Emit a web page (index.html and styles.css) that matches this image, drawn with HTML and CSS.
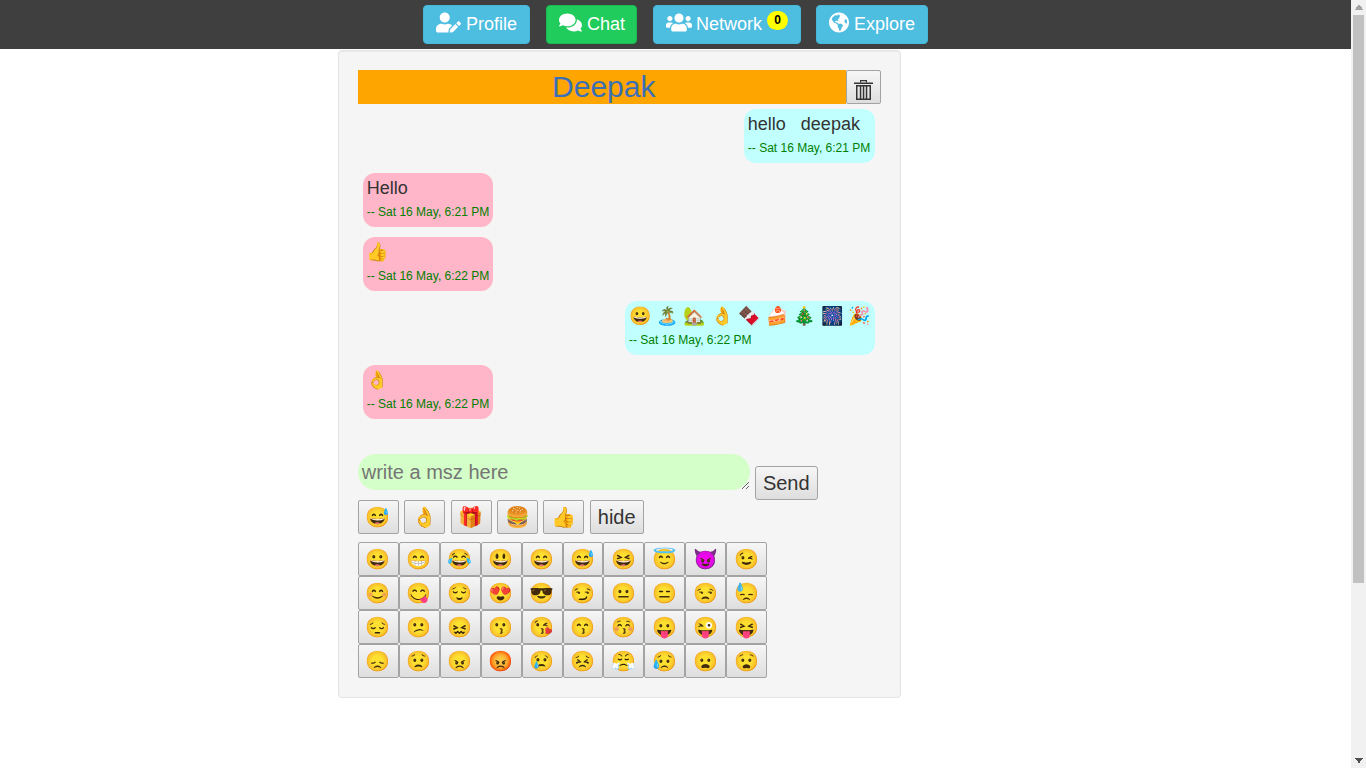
FILE: index.html
```html
<!DOCTYPE html>
<html>
<head>
<meta charset="utf-8">
<title>Chat</title>
<link rel="stylesheet" href="styles.css">
</head>
<body>
<nav class="topbar">
  <a class="nav-btn"><svg class="ic ic-user" viewBox="0 0 640 512"><path d="M224 256c70.700 0 128-57.300 128-128S294.700 0 224 0 96 57.300 96 128s57.300 128 128 128zm89.600 32h-16.700c-22.200 10.200-46.900 16-72.900 16s-50.600-5.800-72.900-16h-16.700C60.200 288 0 348.200 0 422.400V464c0 26.500 21.500 48 48 48h274.900c-2.400-6.800-3.400-14-2.600-21.300l6.800-60.900 1.200-11.100 7.900-7.900 77.300-77.300c-24.500-27.700-60-45.500-99.900-45.500zm45.300 145.300l-6.800 61c-1.100 10.200 7.500 18.800 17.600 17.600l60.900-6.800 137.900-137.900-71.700-71.700-137.900 137.800zM633 268.900L595.100 231c-9.300-9.300-24.500-9.300-33.800 0l-37.800 37.800-4.100 4.100 71.800 71.700 41.800-41.800c9.300-9.400 9.300-24.500 0-33.900z"/></svg> Profile</a>
  <a class="nav-btn nav-green"><svg class="ic ic-comments" viewBox="0 0 576 512"><path d="M416 192c0-88.400-93.100-160-208-160S0 103.600 0 192c0 34.300 14.100 65.900 38 92-13.400 30.200-35.500 54.200-35.800 54.500-2.200 2.300-2.800 5.700-1.500 8.700S4.800 352 8 352c36.600 0 66.900-12.300 88.700-25 32.200 15.700 70.300 25 111.300 25 114.900 0 208-71.600 208-160zm122 220c23.900-26 38-57.700 38-92 0-66.900-53.500-124.200-129.300-148.100.9 6.600 1.300 13.300 1.300 20.100 0 105.900-107.700 192-240 192-10.800 0-21.300-.8-31.700-1.900C207.800 439.600 281.800 480 368 480c41 0 79.100-9.200 111.300-25 21.800 12.700 52.100 25 88.700 25 3.200 0 6.100-1.900 7.300-4.800 1.300-2.900.7-6.300-1.500-8.700-.3-.3-22.400-24.200-35.800-54.500z"/></svg> Chat</a>
  <a class="nav-btn nav-network"><svg class="ic ic-users" viewBox="0 0 640 512"><path d="M96 224c35.300 0 64-28.700 64-64s-28.700-64-64-64-64 28.700-64 64 28.700 64 64 64zm448 0c35.300 0 64-28.700 64-64s-28.700-64-64-64-64 28.700-64 64 28.700 64 64 64zm32 32h-64c-17.600 0-33.500 7.100-45.100 18.600 40.300 22.100 68.900 62 75.100 109.400h66c17.700 0 32-14.300 32-32v-32c0-35.300-28.700-64-64-64zm-256 0c61.900 0 112-50.100 112-112S381.900 32 320 32 208 82.100 208 144s50.100 112 112 112zm76.800 32h-8.300c-20.800 10-43.900 16-68.500 16s-47.600-6-68.500-16h-8.300C179.600 288 128 339.600 128 403.200V432c0 26.500 21.500 48 48 48h288c26.500 0 48-21.500 48-48v-28.800c0-63.600-51.600-115.200-115.200-115.200zm-223.700-13.400C161.500 263.100 145.600 256 128 256H64c-35.300 0-64 28.700-64 64v32c0 17.700 14.300 32 32 32h65.900c6.300-47.400 34.900-87.300 75.200-109.400z"/></svg> Network<span class="badge">0</span></a>
  <a class="nav-btn nav-explore"><svg class="ic ic-globe" viewBox="0 0 496 512"><path d="M248 8C111.030 8 0 119.030 0 256s111.030 248 248 248 248-111.030 248-248S384.970 8 248 8zm82.290 357.600c-3.900 3.880-7.990 7.950-11.310 11.280-2.990 3-5.100 6.700-6.170 10.710-1.510 5.660-2.730 11.380-4.770 16.870l-17.390 46.850c-13.760 3-28 4.690-42.650 4.690v-27.380c1.690-12.620-7.640-36.260-22.630-51.250-6-6-9.370-14.140-9.370-22.630v-32.010c0-11.640-6.270-22.340-16.460-27.970-14.370-7.950-34.810-19.060-48.810-26.110-11.480-5.780-22.100-13.140-31.650-21.750l-.8-.72a114.792 114.792 0 0 1-18.060-20.740c-9.380-13.770-24.660-36.420-34.590-51.140 20.470-45.500 57.360-82.040 103.200-101.890l24.010 12.010C203.480 89.740 216 82.010 216 70.110v-11.300c7.990-1.290 16.120-2.110 24.430-2.410l28.300 28.300c6.250 6.250 6.250 16.380 0 22.630L264 112l-10.340 10.340c-3.120 3.120-3.120 8.190 0 11.310l4.690 4.690c3.120 3.120 3.120 8.190 0 11.310l-8 8a8.008 8.008 0 0 1-5.660 2.340h-8.990c-2.080 0-4.080.81-5.580 2.270l-9.920 9.650a8.008 8.008 0 0 0-1.580 9.310l15.590 31.190c2.660 5.320-1.210 11.580-7.160 11.580h-5.640c-1.930 0-3.790-.7-5.250-1.960l-9.280-8.060a16.017 16.017 0 0 0-15.550-3.100l-31.170 10.390a11.950 11.950 0 0 0-8.170 11.340c0 4.530 2.560 8.660 6.610 10.690l11.080 5.540c9.410 4.710 19.790 7.160 30.310 7.160s22.590 27.290 32 32h66.750c8.490 0 16.620 3.370 22.630 9.370l13.690 13.690a30.503 30.503 0 0 1 8.930 21.570 46.536 46.536 0 0 1-13.720 32.980zM417 274.250c-5.790-1.450-10.840-5-14.150-9.970l-17.980-26.970a23.970 23.970 0 0 1 0-26.620l19.590-29.380c2.320-3.470 5.500-6.290 9.240-8.160l12.980-6.490C440.200 193.590 448 223.870 448 256c0 8.670-.74 17.160-1.820 25.540L417 274.250z"/></svg> Explore</a>
</nav>
<main class="well">
  <div class="head">
    <div class="title">Deepak</div>
    <button class="gbtn trash"><svg viewBox="0 0 19 21" class="trash-ic"><path d="M6 3.500V1h7v2.500H11.800V2.200H7.200V3.500z"/><path d="M0 3.500h19v1.500H0z"/><path d="M2 6h15v15H2zM3.500 7.500v12h2.300v-12zM7.300 7.500v12h1.500v-12zM10.300 7.500v12h1.500v-12zM13.300 7.500v12h2.200v-12z" fill-rule="evenodd"/></svg></button>
  </div>
  <div class="msgs">
    <div class="msg me"><div class="txt">hello &nbsp; deepak</div><div class="time">-- Sat 16 May, 6:21 PM</div></div>
    <div class="msg you"><div class="txt">Hello</div><div class="time">-- Sat 16 May, 6:21 PM</div></div>
    <div class="msg you"><div class="txt">👍</div><div class="time">-- Sat 16 May, 6:22 PM</div></div>
    <div class="msg me wide"><div class="txt">😀 🏝️ 🏡 👌 🍫 🍰 🎄 🎆 🎉</div><div class="time">-- Sat 16 May, 6:22 PM</div></div>
    <div class="msg you"><div class="txt">👌</div><div class="time">-- Sat 16 May, 6:22 PM</div></div>
  </div>
  <div class="compose">
    <textarea class="input" placeholder="write a msz here"></textarea>
    <button class="gbtn send">Send</button>
  </div>
  <div class="tabs">
    <button class="gbtn tab">😅</button>
    <button class="gbtn tab">👌</button>
    <button class="gbtn tab">🎁</button>
    <button class="gbtn tab">🍔</button>
    <button class="gbtn tab">👍</button>
    <button class="gbtn tab hide">hide</button>
  </div>
  <div class="grid">
    <button class="gbtn cell">😀</button><button class="gbtn cell">😁</button><button class="gbtn cell">😂</button><button class="gbtn cell">😃</button><button class="gbtn cell">😄</button><button class="gbtn cell">😅</button><button class="gbtn cell">😆</button><button class="gbtn cell">😇</button><button class="gbtn cell">😈</button><button class="gbtn cell">😉</button>
    <button class="gbtn cell">😊</button><button class="gbtn cell">😋</button><button class="gbtn cell">😌</button><button class="gbtn cell">😍</button><button class="gbtn cell">😎</button><button class="gbtn cell">😏</button><button class="gbtn cell">😐</button><button class="gbtn cell">😑</button><button class="gbtn cell">😒</button><button class="gbtn cell">😓</button>
    <button class="gbtn cell">😔</button><button class="gbtn cell">😕</button><button class="gbtn cell">😖</button><button class="gbtn cell">😗</button><button class="gbtn cell">😘</button><button class="gbtn cell">😙</button><button class="gbtn cell">😚</button><button class="gbtn cell">😛</button><button class="gbtn cell">😜</button><button class="gbtn cell">😝</button>
    <button class="gbtn cell">😞</button><button class="gbtn cell">😟</button><button class="gbtn cell">😠</button><button class="gbtn cell">😡</button><button class="gbtn cell">😢</button><button class="gbtn cell">😣</button><button class="gbtn cell">😤</button><button class="gbtn cell">😥</button><button class="gbtn cell">😦</button><button class="gbtn cell">😧</button>
  </div>
</main>
<aside class="scrollbar">
  <svg class="sb-arrow sb-up" viewBox="0 0 8 5"><path d="M3 0h2v1h1v1h1v2h1v1H0V4h1V2h1V1h1z"/></svg>
  <div class="sb-thumb"></div>
  <svg class="sb-arrow sb-down" viewBox="0 0 8 5"><path d="M0 0h8v1H7v1H6v1H5v2H3V3H2V2H1V1H0z"/></svg>
</aside>
</body>
</html>
```
FILE: styles.css
```css
* { box-sizing: border-box; }
html, body { margin: 0; padding: 0; }
body {
  font-family: "Liberation Sans", Arial, "Noto Color Emoji", sans-serif;
  color: #333;
  background: #fff;
  padding-right: 15px;
  height: 768px;
  overflow: hidden;
}
.scrollbar {
  position: fixed;
  top: 0;
  right: 0;
  bottom: 0;
  width: 15px;
  background: #f1f1f1;
}
.sb-arrow { position: absolute; left: 4px; width: 8px; height: 5px; display: block; shape-rendering: crispEdges; }
.sb-up { top: 5px; fill: #a3a3a3; }
.sb-down { bottom: 5px; fill: #505050; }
.sb-thumb {
  position: absolute;
  top: 15px;
  left: 2px;
  width: 11px;
  height: 568px;
  background: #c1c1c1;
}
.topbar {
  height: 49px;
  background: #3f3f3f;
  display: flex;
  justify-content: center;
  align-items: flex-start;
  gap: 16px;
  padding-top: 5px;
  margin-right: -15px;
  padding-right: 15px;
}
.nav-btn {
  display: flex;
  align-items: center;
  gap: 5px;
  height: 39px;
  padding: 0 12px;
  font-size: 18px;
  color: #fff;
  background: #4dbde0;
  border: 1px solid #46b8da;
  border-radius: 4px;
  position: relative;
}
.nav-green { background: #1fcc5c; border-color: #1cb852; padding-right: 11px; }
.nav-network { padding-right: 38px; gap: 4px; }
.nav-explore { margin-left: -1px; padding-right: 12px; }
.ic { fill: #fff; display: block; height: 21px; margin-top: -4px; }
.ic-user { width: 25px; }
.ic-comments { width: 23px; }
.ic-users { width: 26px; }
.ic-globe { width: 20px; }
.badge {
  position: absolute;
  right: 12px;
  top: 5px;
  width: 21px;
  height: 19px;
  border-radius: 10px;
  background: #ffff00;
  color: #000;
  font-size: 12px;
  font-weight: bold;
  line-height: 19px;
  text-align: center;
}
.well {
  width: 563px;
  height: 648px;
  margin: 1px 0 0 25%;
  padding: 19px;
  background: #f5f5f5;
  border: 1px solid #e3e3e3;
  border-radius: 4px;
  box-shadow: inset 0 1px 1px rgba(0,0,0,.05);
}
.head { display: flex; height: 34px; }
.title {
  width: 488px;
  padding-left: 4px;
  background: #ffa500;
  color: #3b6fb6;
  font-size: 30px;
  line-height: 34px;
  text-align: center;
}
.gbtn {
  font-family: "Liberation Sans", Arial, "Noto Color Emoji", sans-serif;
  color: #333;
  border: 1px solid #a3a3a3;
  border-radius: 2px;
  background: linear-gradient(#f6f6f6, #dedede);
  padding: 0;
  display: block;
}
.trash { width: 35px; height: 34px; display: flex; align-items: center; justify-content: center; }
.trash-ic { width: 19px; height: 21px; fill: #333; margin-top: 4px; }
.msgs { display: flex; flex-direction: column; height: 350px; }
.msg { margin: 5px; padding: 4px; border-radius: 12px; height: 54px; }
.me { background: #c1ffff; align-self: flex-end; margin-right: 5.75px; padding-right: 4.7px; }
.wide { width: 250px; }
.you { background: #ffb6c8; align-self: flex-start; }
.txt { font-size: 18px; line-height: 22px; white-space: nowrap; }
.time { font-size: 12px; line-height: 14px; margin-top: 6px; color: #008000; white-space: nowrap; }
.compose { display: flex; align-items: flex-end; gap: 5px; height: 46px; }
.input {
  width: 392px;
  height: 36px;
  margin-bottom: 10px;
  border: none;
  outline: none;
  border-radius: 18px;
  background: #d4ffc8;
  padding: 3px 4px;
  font-family: "Liberation Sans", Arial, sans-serif;
  font-size: 20px;
  line-height: 30px;
  color: #333;
}
.input::placeholder { color: #757575; opacity: 1; }
.send { width: 63px; height: 34px; font-size: 20px; border-radius: 3px; }
.tabs { display: flex; gap: 5.4px; height: 34px; }
.tab { width: 41px; height: 34px; font-size: 20px; }
.hide { width: 54px; font-size: 20px; }
.grid { display: grid; grid-template-columns: repeat(10, 40.955px); grid-auto-rows: 34px; margin-top: 8px; }
.cell { width: 100%; height: 34px; font-size: 20px; }
```
